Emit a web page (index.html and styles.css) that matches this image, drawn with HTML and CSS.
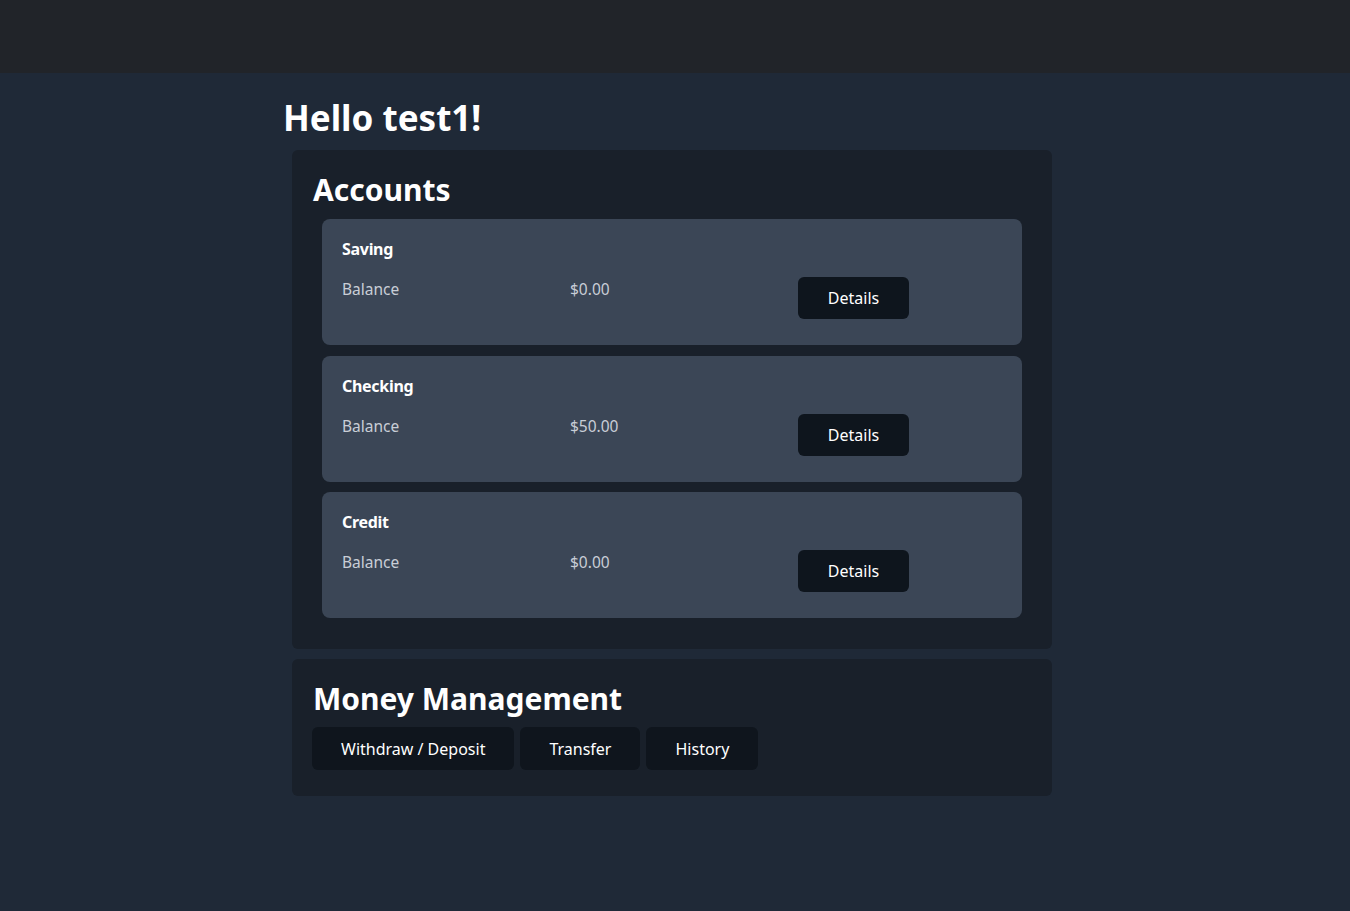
FILE: index.html
```html
<!DOCTYPE html>
<html>
<head>
<meta charset="utf-8">
<link rel="stylesheet" href="styles.css">
</head>
<body>
<nav class="navbar"></nav>
<main class="main">
  <h1 class="greeting">Hello test1!</h1>
  <section class="panel panel-accounts">
    <h2 class="panel-title">Accounts</h2>
    <div class="account-list">
      <div class="account">
        <div class="account-name">Saving</div>
        <div class="account-row">
          <span class="label">Balance</span>
          <span class="amount">$0.00</span>
          <span><button class="btn btn-details">Details</button></span>
        </div>
      </div>
      <div class="account">
        <div class="account-name">Checking</div>
        <div class="account-row">
          <span class="label">Balance</span>
          <span class="amount">$50.00</span>
          <span><button class="btn btn-details">Details</button></span>
        </div>
      </div>
      <div class="account">
        <div class="account-name">Credit</div>
        <div class="account-row">
          <span class="label">Balance</span>
          <span class="amount">$0.00</span>
          <span><button class="btn btn-details">Details</button></span>
        </div>
      </div>
    </div>
  </section>
  <section class="panel panel-money">
    <h2 class="panel-title">Money Management</h2>
    <div class="actions">
      <button class="btn btn-action">Withdraw / Deposit</button>
      <button class="btn btn-action">Transfer</button>
      <button class="btn btn-action">History</button>
    </div>
  </section>
</main>
</body>
</html>
```
FILE: styles.css
```css
* { box-sizing: border-box; }
html, body { margin: 0; padding: 0; }
body {
  background: #1f2937;
  color: #ffffff;
  font-family: "Noto Sans", "Open Sans", sans-serif;
  min-height: 911px;
}
.navbar {
  height: 73px;
  background: #212429;
}
.main {
  width: 784px;
  margin: 0 auto;
  padding-top: 20px;
}
.greeting {
  margin: 0 0 8px 0;
  font-size: 35px;
  line-height: 49px;
  font-weight: 700;
  color: #ffffff;
}
.panel {
  width: 760px;
  margin-left: 9px;
  background: #19202a;
  border-radius: 6px;
  padding: 21px 30px 30px 21px;
}
.panel-accounts {
  padding-bottom: 31px;
}
.panel-title {
  margin: 0 0 10px 0;
  font-size: 30px;
  line-height: 38px;
  font-weight: 700;
}
.account-list {
  display: flex;
  flex-direction: column;
  gap: 10.5px;
  margin-left: 9px;
}
.account {
  background: #3b4656;
  border-radius: 8px;
  padding: 20px 20px 26px 20px;
  height: 126px;
}
.account-name {
  font-size: 16px;
  letter-spacing: -0.3px;
  font-weight: 700;
  line-height: 20px;
  margin-bottom: 18px;
}
.account-row {
  display: grid;
  grid-template-columns: 228px 228px 228px;
  font-size: 15.5px;
  line-height: 24px;
  color: #c9ced6;
}
.btn {
  border: none;
  font-family: inherit;
  color: #ffffff;
  cursor: pointer;
}
.btn-details {
  background: #0e151d;
  width: 111px;
  height: 42px;
  border-radius: 6px;
  font-size: 16px;
}
.panel-money {
  margin-top: 10px;
  padding-bottom: 26px;
}
.panel-money .panel-title {
  margin-bottom: 9px;
}
.actions {
  display: flex;
  gap: 6px;
  margin-left: -1px;
}
.btn-action {
  background: #0f151d;
  height: 43px;
  padding: 0 29px;
  border-radius: 6px;
  font-size: 16px;
}
```
